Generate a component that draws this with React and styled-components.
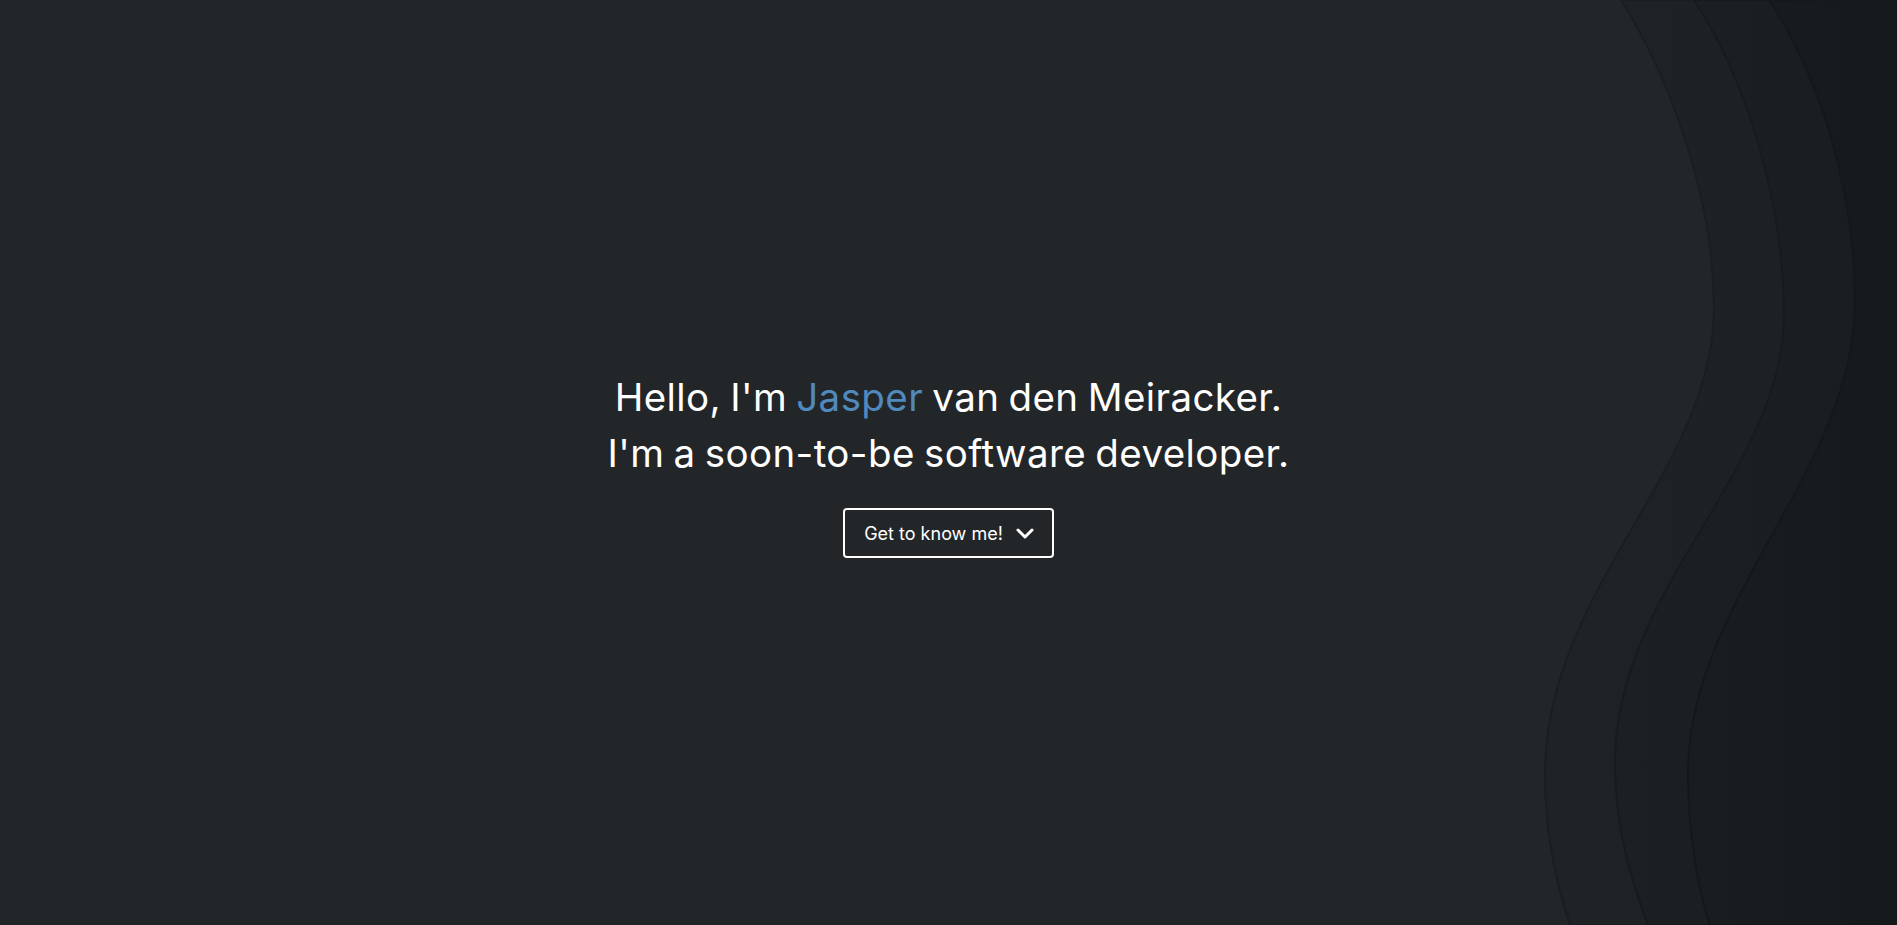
import React from 'react'
import styled, { createGlobalStyle } from 'styled-components'

const GlobalStyle = createGlobalStyle`
  * { box-sizing: border-box; }
  html, body {
    margin: 0;
    padding: 0;
    background-color: #222629;
    font-family: "Inter", "Open Sans", sans-serif;
    overflow: hidden;
  }
`

const Landing = styled.section`
  position: relative;
  height: 100vh;
  width: 100%;
  display: flex;
  align-items: center;
  justify-content: center;
  background-color: #222629;
  overflow: hidden;
`

const Waves = styled.svg`
  position: absolute;
  inset: 0;
  width: 100%;
  height: 100%;
  pointer-events: none;
`

const Intro = styled.div`
  position: relative;
  display: flex;
  flex-direction: column;
  align-items: center;
  gap: 27px;
  margin-top: 2px;
`

const Titel = styled.h1`
  margin: 0;
  font-size: 38.5px;
  font-weight: 400;
  line-height: 56px;
  color: #ffffff;
  text-align: center;
  letter-spacing: 0.4px;
  word-spacing: -2px;
`

const Naam = styled.span`
  color: #5189bd;
`

const KnopKennis = styled.button`
  display: flex;
  align-items: center;
  gap: 12px;
  height: 50px;
  padding: 0 17px 0 19px;
  background: transparent;
  border: 2px solid #ffffff;
  border-radius: 4px;
  color: #ffffff;
  font-family: "Inter", "Open Sans", sans-serif;
  font-size: 18px;
  font-weight: 400;
  cursor: pointer;
`

const Pijl = () => (
  <svg width="20" height="14" viewBox="0 0 20 14" fill="none">
    <path d="M3 4 L10 11 L17 4" stroke="#ffffff" strokeWidth="3" strokeLinecap="round" strokeLinejoin="round" />
  </svg>
)

const App = () => {
  return (
    <>
      <GlobalStyle />
      <Landing>
        <Waves viewBox="0 0 1897 925" preserveAspectRatio="none">
          <defs>
            <linearGradient id="laag1" x1="0" y1="0" x2="1" y2="0">
              <stop offset="0" stopColor="#202326" />
              <stop offset="1" stopColor="#1d2023" />
            </linearGradient>
            <linearGradient id="laag2" x1="0" y1="0" x2="1" y2="0">
              <stop offset="0" stopColor="#1d2023" />
              <stop offset="1" stopColor="#1a1d1f" />
            </linearGradient>
            <linearGradient id="laag3" x1="0" y1="0" x2="1" y2="0">
              <stop offset="0" stopColor="#1a1d1f" />
              <stop offset="1" stopColor="#16191b" />
            </linearGradient>
          </defs>
          <path
            d="M1621,0 C1665,70 1714,190 1714,308 C1714,470 1545,590 1545,774 C1545,840 1560,895 1570,925 L1897,925 L1897,0 Z"
            fill="url(#laag1)" stroke="#1b1e21" strokeWidth="2"
          />
          <path
            d="M1694,0 C1740,70 1784,190 1784,315 C1784,470 1615,590 1615,762 C1615,835 1635,890 1648,925 L1897,925 L1897,0 Z"
            fill="url(#laag2)" stroke="#181b1d" strokeWidth="2"
          />
          <path
            d="M1769,0 C1815,70 1855,180 1855,302 C1855,470 1688,600 1688,774 C1688,840 1700,895 1710,925 L1897,925 L1897,0 Z"
            fill="url(#laag3)" stroke="#15181a" strokeWidth="2"
          />
        </Waves>
        <Intro>
          <Titel>
            Hello, I'm <Naam>Jasper</Naam> van den Meiracker.
            <br />
            I'm a soon-to-be software developer.
          </Titel>
          <KnopKennis>
            Get to know me!
            <Pijl />
          </KnopKennis>
        </Intro>
      </Landing>
    </>
  )
}

export default App
